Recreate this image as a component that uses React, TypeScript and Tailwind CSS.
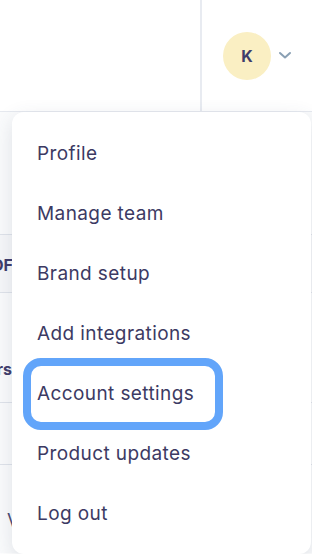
import React from 'react';

const menuItems = [
  'Profile',
  'Manage team',
  'Brand setup',
  'Add integrations',
  'Account settings',
  'Product updates',
  'Log out',
];

export default function App() {
  const focused = 'Account settings';

  return (
    <div className="relative w-[312px] h-[554px] overflow-hidden bg-white" style={{ fontFamily: 'Inter, "Noto Sans", sans-serif' }}>
      {/* Top bar */}
      <header className="flex h-[112px] border-b border-[#e6e9ef]">
        <div className="flex-1" />
        <div className="flex w-[112px] items-center border-l-2 border-[#e8ebf1] pl-[21px]">
          <div className="flex h-[48px] w-[48px] items-center justify-center rounded-full bg-[#faefc3] text-[16px] font-bold text-[#3f3d6b]">
            K
          </div>
          <svg className="ml-[7px] mt-[-2px]" width="14" height="14" viewBox="0 0 14 14" fill="none">
            <path d="M2 5l5 4.5L12 5" stroke="#8aa0b4" strokeWidth="2" strokeLinecap="round" strokeLinejoin="round" />
          </svg>
        </div>
      </header>

      {/* Page content behind the menu */}
      <div className="bg-[#fafbfc] text-[#3f3d6b]">
        <div className="h-[123px] border-b border-[#dfe3ea]" />
        <div className="flex h-[58px] items-center border-b border-[#dfe3ea] bg-[#f6f7f9] pt-[2px]">
          <div className="flex w-[13px] justify-end whitespace-nowrap">
            <span className="text-[16px] font-bold uppercase">Proof</span>
          </div>
        </div>
        <div className="flex h-[110px] items-center border-b border-[#dfe3ea] pt-[42px]">
          <div className="flex w-[12px] justify-end whitespace-nowrap">
            <span className="text-[16px] font-bold">Members</span>
          </div>
        </div>
        <div className="h-[62px] border-b border-[#dfe3ea]" />
        <div className="flex h-[88px] items-center pt-[22px]">
          <span className="ml-[7px] text-[18px] text-[#4b4a72]">View</span>
        </div>
      </div>

      {/* Dropdown menu */}
      <div className="absolute left-[12px] top-[112px] h-[442px] w-[299px] rounded-[12px] bg-white shadow-[0_6px_20px_rgba(60,70,100,0.14)]">
        <ul className="flex flex-col gap-[4px] pt-[14px]">
          {menuItems.map((item) => (
            <li
              key={item}
              className={`ml-[19px] flex h-[56px] items-center pl-[6px] text-[19px] tracking-[0.4px] text-[#3c3a63] ${
                item === focused ? 'w-[184px] rounded-[10px] outline-[8px] outline-solid outline-[#62a5fa]' : ''
              }`}
            >
              {item}
            </li>
          ))}
        </ul>
      </div>
    </div>
  );
}
